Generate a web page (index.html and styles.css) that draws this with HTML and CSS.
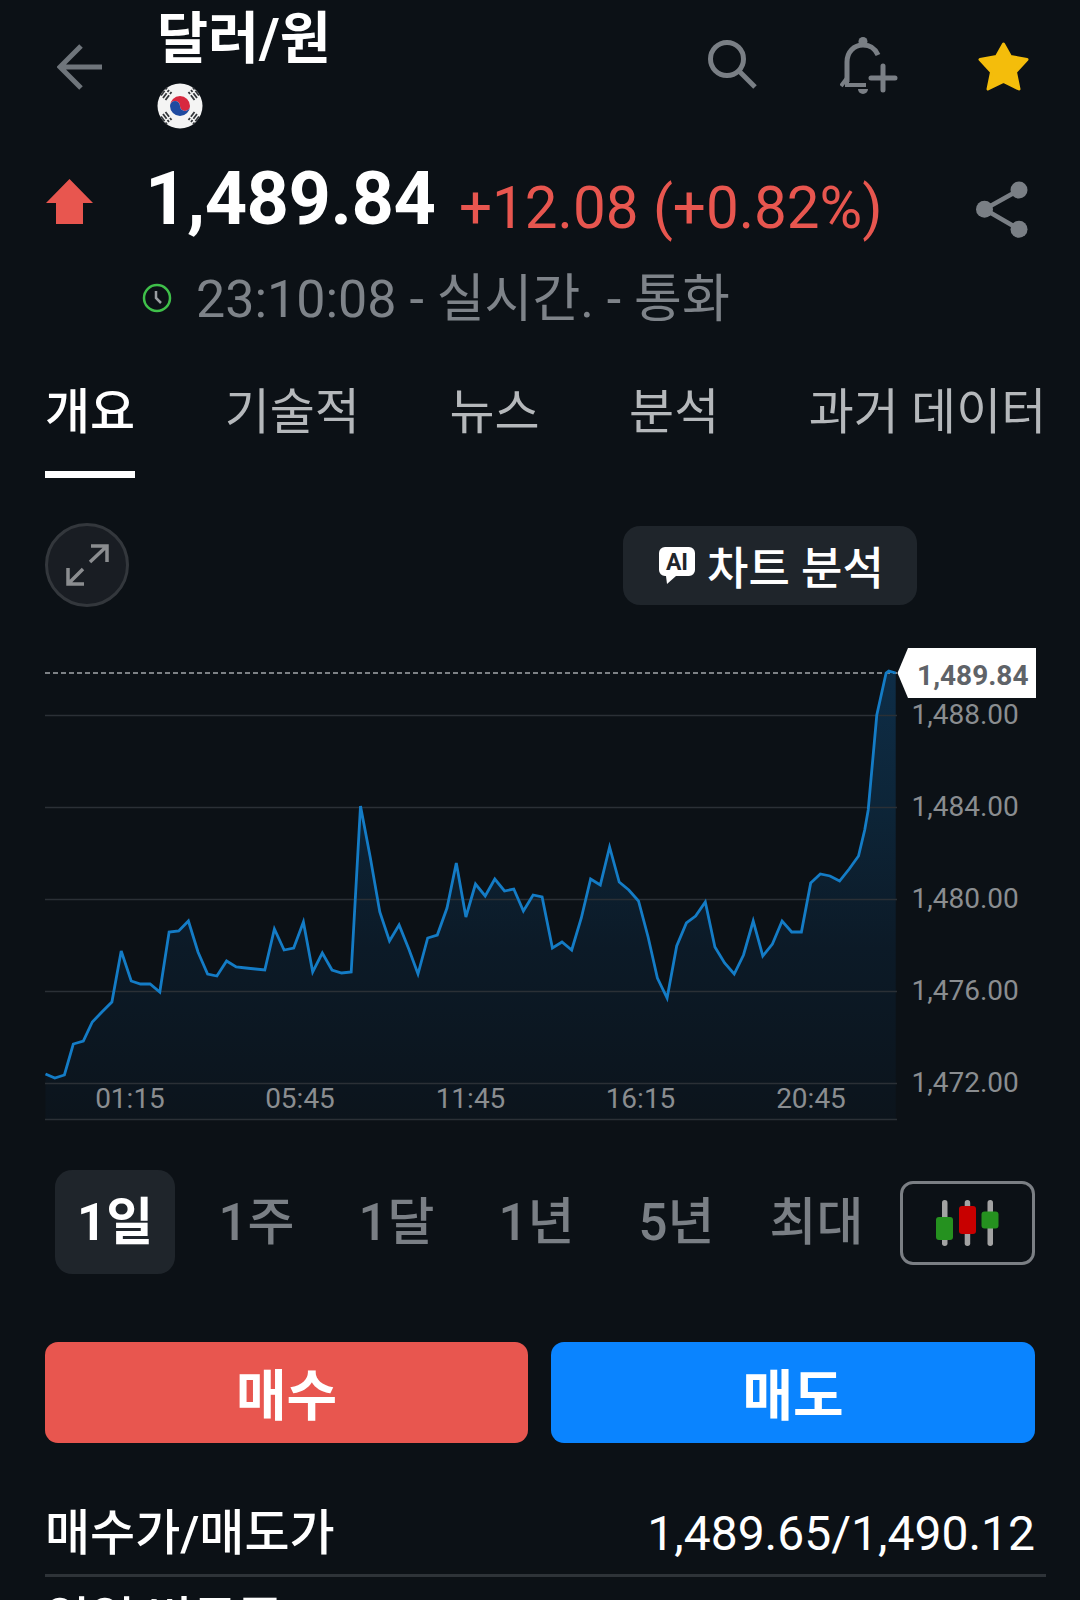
FILE: index.html
```html
<!DOCTYPE html>
<html lang="ko">
<head>
    <meta charset="UTF-8">
    <meta name="viewport" content="width=device-width, initial-scale=1.0">
    <title>달러/원</title>
    <link rel="stylesheet" href="styles.css">
</head>
<body>
<div class="page">
    <header class="header">
        <svg class="back" width="46" height="46" viewBox="0 0 46 46" fill="none" stroke="#6f757b" stroke-width="5">
            <path d="M45 23H3M24 2L3 23L24 44"/>
        </svg>
        <div class="title-block">
            <h1 class="title">달러/원</h1>
            <svg class="flag" width="46" height="46" viewBox="0 0 46 46">
                <circle cx="23" cy="23" r="22.500" fill="#f4f4f4"/>
                <path d="M13 23a10 10 0 0 1 20 0a5 5 0 0 1-10 0a5 5 0 0 0-10 0z" fill="#d8283f"/>
                <path d="M13 23a5 5 0 0 1 10 0a5 5 0 0 0 10 0a10 10 0 0 1-20 0z" fill="#1f4aa0"/>
                <path d="M6 15l6-8M8.500 17l6-8M4 12.500l6-8M40 15l-6-8M37.500 17l-6-8M42 12.500l-6-8M6 31l6 8M8.500 29l6 8M4 33.500l6 8M40 31l-6 8M37.500 29l-6 8M42 33.500l-6 8" stroke="#33363a" stroke-width="1.800" stroke-dasharray="6 1.500"/>
            </svg>
        </div>
        <div class="header-icons">
            <svg class="icon-search" width="50" height="50" viewBox="0 0 50 50" fill="none" stroke="#7a7f85" stroke-width="5">
                <circle cx="19" cy="19" r="16.500"/>
                <path d="M31 31L47 47"/>
            </svg>
            <svg class="icon-bell" width="60" height="62" viewBox="0 0 60 62" fill="none" stroke="#7a7f85" stroke-width="5">
                <path d="M7 46V26C7 16 14 9 23 9C30 9 35 12 38 19"/>
                <path d="M1 50L7 42V49H26" stroke-width="4"/>
                <circle cx="23" cy="5.500" r="4.500" fill="#7a7f85" stroke="none"/>
                <path d="M18 53H28A5 5 0 0 1 18 53Z" fill="#7a7f85" stroke="none"/>
                <path d="M43 30V54M31 42H55" stroke-linecap="round"/>
            </svg>
            <svg class="icon-star" width="52" height="52" viewBox="0 0 52 52">
                <path d="M25.500 3L32.500 15.500L49 18.500L37.500 31L41 48L25.500 40.500L10 48L13.500 31L2 18.500L18.500 15.500Z" fill="#f4bd0b" stroke="#f4bd0b" stroke-width="3" stroke-linejoin="round"/>
            </svg>
        </div>
    </header>

    <section class="quote">
        <svg class="up-arrow" width="48" height="46" viewBox="0 0 48 46">
            <path d="M23.500 0L47 24H37V45H10V24H0Z" fill="#e8564f"/>
        </svg>
        <span class="price">1,489.84</span>
        <span class="change">+12.08 (+0.82%)</span>
        <svg class="share" width="58" height="64" viewBox="0 0 58 64" fill="#7a7f85" stroke="#7a7f85">
            <path d="M46 12L11.500 31.300L46 51.300" fill="none" stroke-width="4.500"/>
            <circle cx="46" cy="12" r="8.500" stroke="none"/>
            <circle cx="11.500" cy="31.300" r="8.500" stroke="none"/>
            <circle cx="46" cy="51.300" r="8.500" stroke="none"/>
        </svg>
    </section>

    <div class="meta">
        <svg class="clock" width="30" height="30" viewBox="0 0 30 30" fill="none">
            <circle cx="15" cy="15" r="13" stroke="#3fc04a" stroke-width="2.500"/>
            <path d="M14 8V15L19 20" stroke="#9a9ea2" stroke-width="2.500"/>
        </svg>
        <span>23:10:08 - 실시간. - 통화</span>
    </div>

    <nav class="tabs">
        <a class="tab active">개요</a>
        <a class="tab">기술적</a>
        <a class="tab">뉴스</a>
        <a class="tab">분석</a>
        <a class="tab">과거 데이터</a>
    </nav>

    <div class="tools">
        <button class="expand">
            <svg width="43" height="43" viewBox="0 0 43 43" fill="none" stroke="#8b8d90" stroke-width="3.500">
                <path d="M25 2H41V18M41 2L24 18M2 24V40H18M2 40L17 25"/>
            </svg>
        </button>
        <button class="ai-button">
            <svg width="36" height="37" viewBox="0 0 36 37">
                <path d="M6 0H30A6 6 0 0 1 36 6V23A6 6 0 0 1 30 29H17L8 37L7 29H6A6 6 0 0 1 0 23V6A6 6 0 0 1 6 0Z" fill="#fff"/>
                <text x="18" y="23" class="ai-mark">AI</text>
            </svg>
            차트 분석
        </button>
    </div>

    <div class="chart">
        <svg width="1080" height="500" viewBox="0 630 1080 500">
            <defs>
                <linearGradient id="area" gradientUnits="userSpaceOnUse" x1="0" y1="670" x2="0" y2="1120">
                    <stop offset="0" stop-color="#0e2d47"/>
                    <stop offset="0.3" stop-color="#0d2538"/>
                    <stop offset="0.62" stop-color="#0c1a27"/>
                    <stop offset="1" stop-color="#0c141c"/>
                </linearGradient>
            </defs>
            <polygon fill="url(#area)" points="45.500,1074 54.800,1078 64.400,1075 73.300,1044 83.300,1041 92.300,1022 101.900,1012 111.900,1002 121.200,951 131.200,981 140.500,984 150.100,984 159.800,992 169.100,932 178.700,931 188.400,921 198,952 207.600,974 216.900,976 226.600,961 236.200,967 245.900,968 255.500,969 264.800,970 274.400,929 284.100,950 293.700,948 303.400,922 312.700,972 322.300,953 332,970 341.600,973 351.200,972 360.500,806 370.200,857 379.800,912 389.500,941 399.100,925 408.800,949 418,974 427.700,938 437.300,935 447,908 456.300,863 465.900,917 475.500,884 485.200,896 494.800,879 504.500,891 513.800,889 523.400,911 533.100,895 542.100,897 552.400,948 562,942 571.700,950 581.300,918 590.600,879 600.300,885 609.600,847 619.200,882 628.800,890 638.500,901 648.100,937 657.400,978 667.100,998 676.700,946 686.400,923 695.600,916 705.300,902 714.900,947 724.600,963 734.200,974 743.500,955 753.200,921 762.800,956 772.400,944 782.100,921 791.700,932 801.400,932 810.700,883 820.300,874 830,876 839.600,881 849.200,869 858.500,856 864.700,830 868.200,810 876.800,715 886.100,673 888.800,671 895.700,673 895.700,1119.500 45.500,1119.500"/>
            <g class="grid">
                <path d="M45 715.500H897M45 807.500H897M45 899.500H897M45 991.500H897M45 1083.500H897M45 1119.500H897"/>
            </g>
            <path class="last-line" d="M45 673H897"/>
            <polyline class="line" points="45.500,1074 54.800,1078 64.400,1075 73.300,1044 83.300,1041 92.300,1022 101.900,1012 111.900,1002 121.200,951 131.200,981 140.500,984 150.100,984 159.800,992 169.100,932 178.700,931 188.400,921 198,952 207.600,974 216.900,976 226.600,961 236.200,967 245.900,968 255.500,969 264.800,970 274.400,929 284.100,950 293.700,948 303.400,922 312.700,972 322.300,953 332,970 341.600,973 351.200,972 360.500,806 370.200,857 379.800,912 389.500,941 399.100,925 408.800,949 418,974 427.700,938 437.300,935 447,908 456.300,863 465.900,917 475.500,884 485.200,896 494.800,879 504.500,891 513.800,889 523.400,911 533.100,895 542.100,897 552.400,948 562,942 571.700,950 581.300,918 590.600,879 600.300,885 609.600,847 619.200,882 628.800,890 638.500,901 648.100,937 657.400,978 667.100,998 676.700,946 686.400,923 695.600,916 705.300,902 714.900,947 724.600,963 734.200,974 743.500,955 753.200,921 762.800,956 772.400,944 782.100,921 791.700,932 801.400,932 810.700,883 820.300,874 830,876 839.600,881 849.200,869 858.500,856 864.700,830 868.200,810 876.800,715 886.100,673 888.800,671 895.700,673"/>
            <g class="axis-text">
                <text x="911.500" y="724">1,488.00</text>
                <text x="911.500" y="816">1,484.00</text>
                <text x="911.500" y="908">1,480.00</text>
                <text x="911.500" y="1000">1,476.00</text>
                <text x="911.500" y="1092">1,472.00</text>
            </g>
            <g class="axis-text time">
                <text x="130" y="1108">01:15</text>
                <text x="300" y="1108">05:45</text>
                <text x="470.500" y="1108">11:45</text>
                <text x="640.500" y="1108">16:15</text>
                <text x="811" y="1108">20:45</text>
            </g>
            <polygon points="897.500,673 908,648 1036,648 1036,698 908,698" fill="#fff"/>
            <text class="price-tag" x="1028.500" y="685">1,489.84</text>
        </svg>
    </div>

    <div class="ranges">
        <a class="range active">1일</a>
        <a class="range">1주</a>
        <a class="range">1달</a>
        <a class="range">1년</a>
        <a class="range">5년</a>
        <a class="range">최대</a>
        <button class="candle-toggle">
            <svg width="64" height="46" viewBox="0 0 64 46">
                <rect x="6" y="0" width="5.500" height="46" rx="2.700" fill="#a3a3a3"/>
                <rect x="28.700" y="0" width="5.500" height="46" rx="2.700" fill="#a3a3a3"/>
                <rect x="51.500" y="0" width="5.500" height="46" rx="2.700" fill="#a3a3a3"/>
                <rect x="0" y="17" width="17" height="23" rx="3" fill="#25911f"/>
                <rect x="23" y="6" width="17" height="28" rx="3" fill="#c80000"/>
                <rect x="45.500" y="11.500" width="17" height="17" rx="3" fill="#25911f"/>
            </svg>
        </button>
    </div>

    <div class="trade">
        <button class="trade-button buy">매수</button>
        <button class="trade-button sell">매도</button>
    </div>

    <div class="info-row">
        <span class="info-label">매수가/매도가</span>
        <span class="info-value">1,489.65/1,490.12</span>
    </div>
    <div class="info-row next">
        <span class="info-label">일일 변동폭</span>
    </div>
</div>
</body>
</html>
```

FILE: styles.css
```css
* {
    box-sizing: border-box;
}
body {
    margin: 0;
    background: #0c1116;
    color: #fff;
    font-family: Roboto, "Noto Sans CJK KR", sans-serif;
}
svg {
    display: block;
    flex: none;
}
button {
    font-family: inherit;
    border: none;
    padding: 0;
    color: #fff;
}
.page {
    width: 1080px;
    height: 1600px;
    overflow: hidden;
}

/* header */
.header {
    display: flex;
    height: 150px;
    padding-left: 57px;
}
.back {
    margin-top: 44px;
}
.title-block {
    margin-left: 54px;
}
.title {
    margin: 0;
    height: 83px;
    font-size: 55.500px;
    line-height: 80px;
    font-weight: 700;
}
.header-icons {
    display: flex;
    align-items: flex-start;
}
.icon-search {
    margin: 40px 0 0 377px;
}
.icon-bell {
    margin: 36px 0 0 82px;
}
.icon-star {
    margin: 41px 0 0 78px;
}

/* quote */
.quote {
    display: flex;
    align-items: flex-start;
    height: 120px;
    padding-left: 46px;
}
.up-arrow {
    margin-top: 29px;
}
.price {
    margin-left: 51px;
    margin-top: 5px;
    font-size: 74px;
    letter-spacing: -0.5px;
    line-height: 88px;
    font-weight: 700;
}
.change {
    margin-left: 23.500px;
    margin-top: 19px;
    font-size: 58.300px;
    line-height: 78px;
    color: #e8564f;
}
.share {
    margin-left: 90.500px;
    margin-top: 28px;
}
.meta {
    display: flex;
    align-items: center;
    height: 60px;
    margin-top: -2px;
    padding-left: 142px;
    font-size: 52px;
    color: #7e8389;
}
.meta span {
    margin-left: 24px;
    margin-top: -8px;
}

/* tabs */
.tabs {
    display: flex;
    gap: 89.500px;
    height: 111px;
    margin-top: 40px;
    padding-left: 45px;
    white-space: nowrap;
}
.tab {
    height: 110px;
    padding-top: 12px;
    font-size: 49px;
    line-height: 66px;
    color: #b5b8bb;
}
.tab.active {
    color: #fff;
    font-weight: 500;
    border-bottom: 7px solid #fff;
}

/* chart */
.tools {
    display: flex;
    align-items: center;
    justify-content: space-between;
    height: 84px;
    margin-top: 44px;
    padding: 0 163px 0 45px;
}
.expand {
    display: flex;
    align-items: center;
    justify-content: center;
    width: 84px;
    height: 84px;
    border-radius: 50%;
    background: #191d23;
    border: 3px solid #33373c;
}
.ai-button {
    display: flex;
    align-items: center;
    gap: 12px;
    width: 294px;
    height: 79px;
    padding-left: 36px;
    border-radius: 17px;
    background: #1f252b;
    font-size: 45px;
    font-weight: 500;
    white-space: nowrap;
}
.ai-mark {
    font-size: 23px;
    font-weight: 700;
    text-anchor: middle;
    fill: #1f252b;
}
.chart {
    margin-top: 23px;
    height: 500px;
}
.grid path {
    fill: none;
    stroke: #2b3036;
    stroke-width: 1.500;
}
.last-line {
    fill: none;
    stroke: #7d8185;
    stroke-width: 2;
    stroke-dasharray: 5 3;
}
.line {
    fill: none;
    stroke: #147cc6;
    stroke-width: 2.800;
}
.axis-text {
    font-size: 28px;
    fill: #8a8d90;
}
.axis-text.time {
    text-anchor: middle;
}
.price-tag {
    font-size: 28px;
    font-weight: 700;
    fill: #5f6368;
    text-anchor: end;
}

/* range picker */
.ranges {
    display: flex;
    align-items: center;
    gap: 20px;
    height: 104px;
    margin-top: 40px;
    padding-left: 55px;
}
.range {
    width: 120px;
    height: 104px;
    padding-left: 3px;
    border-radius: 17px;
    font-size: 51px;
    line-height: 106px;
    font-weight: 500;
    text-align: center;
    color: #7a7f85;
}
.range.active {
    padding-left: 0;
    background: #1f252b;
    color: #fff;
    font-weight: 700;
}
.candle-toggle {
    display: flex;
    align-items: center;
    justify-content: center;
    width: 135px;
    height: 84px;
    margin: 2px 0 0 5px;
    background: none;
    border: 3px solid #7b7f84;
    border-radius: 13px;
}

/* buy / sell */
.trade {
    display: flex;
    gap: 23px;
    width: 1035px;
    height: 101px;
    margin-top: 68px;
    padding-left: 45px;
}
.trade-button {
    padding-bottom: 4px;
    border-radius: 13px;
    font-size: 55px;
    font-weight: 700;
}
.buy {
    width: 483px;
    background: #e8564f;
}
.sell {
    flex: 1;
    background: #0a84ff;
}

/* info rows */
.info-row {
    display: flex;
    align-items: center;
    justify-content: space-between;
    width: 1001px;
    height: 87px;
    margin: 47px 0 0 45px;
    padding: 3px 11px 0 0;
    border-bottom: 3px solid #2e3338;
    font-size: 48px;
    line-height: 64px;
}
.info-row.next {
    margin-top: 0;
    border: none;
    padding-top: 12px;
    align-items: flex-start;
}
.info-label {
    font-size: 49px;
    font-weight: 500;
}
```
